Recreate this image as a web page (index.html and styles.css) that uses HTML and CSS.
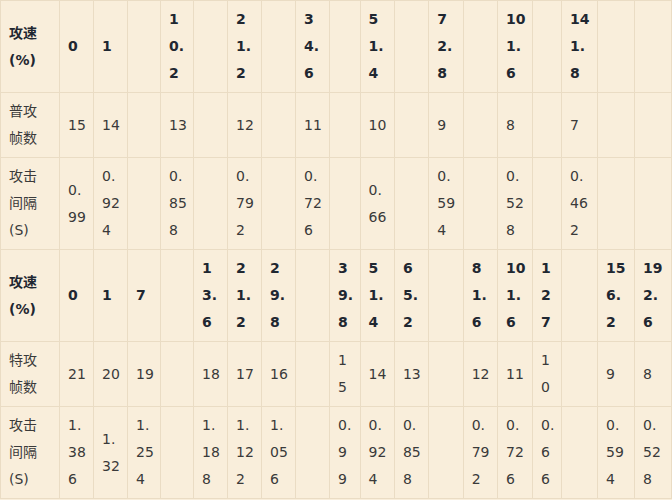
FILE: index.html
```html
<!DOCTYPE html>
<html lang="zh-CN">
<head>
<meta charset="utf-8">
<title>攻速帧数表</title>
<link rel="stylesheet" href="styles.css">
</head>
<body>
<table class="speed-table">
  <colgroup>
    <col class="c-label">
    <col class="c34"><col class="c34"><col class="c33"><col class="c33">
    <col class="c34"><col class="c34"><col class="c34"><col class="c34">
    <col class="c30"><col class="c344"><col class="c344"><col class="c344"><col class="c344">
    <col class="c35"><col class="c29"><col class="c36"><col class="c37"><col class="c37">
  </colgroup>
  <tbody>
    <tr class="head">
      <th>攻速(%)</th><th>0</th><th>1</th><th></th><th>10.2</th><th></th><th>21.2</th><th></th><th>34.6</th><th></th><th>51.4</th><th></th><th>72.8</th><th></th><th>101.6</th><th></th><th>141.8</th><th></th><th></th>
    </tr>
    <tr>
      <td>普攻帧数</td><td>15</td><td>14</td><td></td><td>13</td><td></td><td>12</td><td></td><td>11</td><td></td><td>10</td><td></td><td>9</td><td></td><td>8</td><td></td><td>7</td><td></td><td></td>
    </tr>
    <tr>
      <td>攻击间隔(S)</td><td>0.99</td><td>0.924</td><td></td><td>0.858</td><td></td><td>0.792</td><td></td><td>0.726</td><td></td><td>0.66</td><td></td><td>0.594</td><td></td><td>0.528</td><td></td><td>0.462</td><td></td><td></td>
    </tr>
  </tbody>
  <tbody>
    <tr class="head">
      <th>攻速(%)</th><th>0</th><th>1</th><th>7</th><th></th><th>13.6</th><th>21.2</th><th>29.8</th><th></th><th>39.8</th><th>51.4</th><th>65.2</th><th></th><th>81.6</th><th>101.6</th><th>127</th><th></th><th>156.2</th><th>192.6</th>
    </tr>
    <tr>
      <td>特攻帧数</td><td>21</td><td>20</td><td>19</td><td></td><td>18</td><td>17</td><td>16</td><td></td><td>15</td><td>14</td><td>13</td><td></td><td>12</td><td>11</td><td>10</td><td></td><td>9</td><td>8</td>
    </tr>
    <tr>
      <td>攻击间隔(S)</td><td>1.386</td><td>1.32</td><td>1.254</td><td></td><td>1.188</td><td>1.122</td><td>1.056</td><td></td><td>0.99</td><td>0.924</td><td>0.858</td><td></td><td>0.792</td><td>0.726</td><td>0.66</td><td></td><td>0.594</td><td>0.528</td>
    </tr>
  </tbody>
</table>
</body>
</html>
```

FILE: styles.css
```css
html, body {
  margin: 0;
  padding: 0;
  background: #f9eedb;
  overflow: hidden;
}

.speed-table {
  table-layout: fixed;
  width: 671.1px;
  border-collapse: collapse;
  font-family: "DejaVu Sans", "Noto Sans CJK SC", sans-serif;
  font-size: 14px;
  line-height: 27px;
  color: #3a3a3a;
  background: #f9eedb;
}

.c-label { width: 59px; }
.c29 { width: 29px; }
.c30 { width: 30.5px; }
.c33 { width: 33px; }
.c34 { width: 34px; }
.c344 { width: 34.4px; }
.c35 { width: 35px; }
.c36 { width: 36px; }
.c37 { width: 37px; }

.speed-table th,
.speed-table td {
  border: 1px solid #eadcc4;
  padding: 5px 6px 5px 8px;
  text-align: left;
  vertical-align: middle;
  word-break: break-all;
  overflow-wrap: anywhere;
}

.speed-table th:first-child,
.speed-table td:first-child {
  padding-right: 9px;
}

.speed-table th {
  font-weight: bold;
  color: #1f2731;
}
```
